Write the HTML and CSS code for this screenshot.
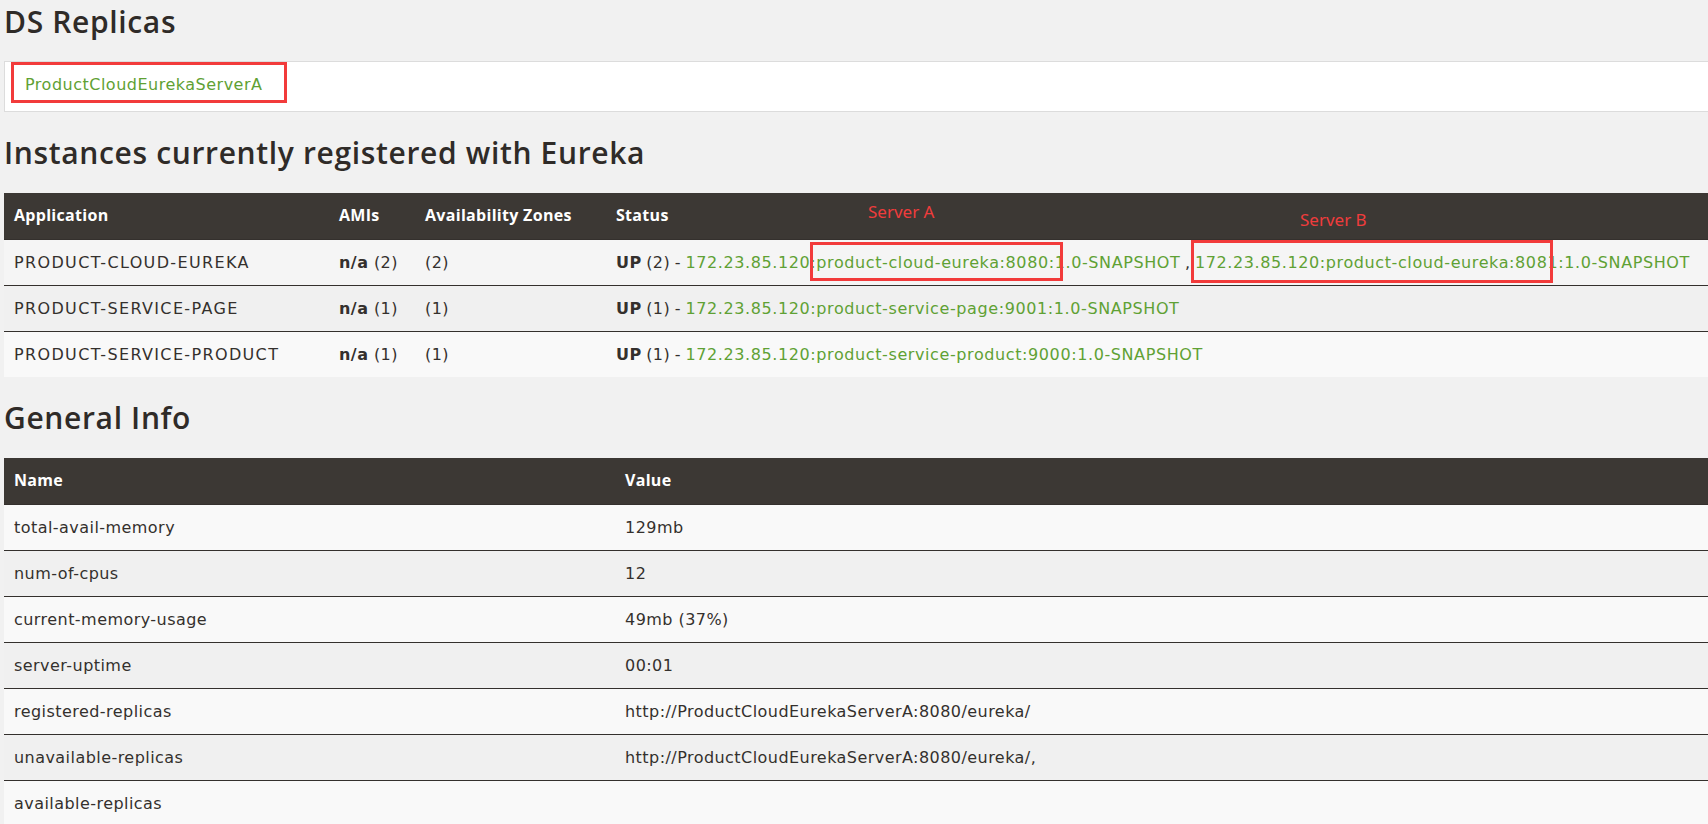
FILE: index.html
```html
<!DOCTYPE html>
<html lang="en">
<head>
<meta charset="utf-8">
<title>Eureka</title>
<link rel="stylesheet" href="styles.css">
</head>
<body>
<div class="page">
  <h1 class="title title-main">DS Replicas</h1>
  <div class="replicas">
    <a class="link" href="#">ProductCloudEurekaServerA</a>
    <span class="mark mark-replica"></span>
  </div>

  <h2 class="title title-section">Instances currently registered with Eureka</h2>
  <div class="instances-wrap">
    <table class="grid">
      <colgroup>
        <col class="c-app"><col class="c-ami"><col class="c-zone"><col>
      </colgroup>
      <thead>
        <tr><th>Application</th><th>AMIs</th><th>Availability Zones</th><th>Status</th></tr>
      </thead>
      <tbody>
        <tr class="row-hover">
          <td class="app">PRODUCT-CLOUD-EUREKA</td>
          <td><b>n/a</b> (2)</td>
          <td>(2)</td>
          <td class="status"><b>UP</b> (2) - <a class="link" href="#">172.23.85.120:product-cloud-eureka:8080:1.0-SNAPSHOT</a> , <a class="link" href="#">172.23.85.120:product-cloud-eureka:8081:1.0-SNAPSHOT</a></td>
        </tr>
        <tr class="row-even">
          <td class="app">PRODUCT-SERVICE-PAGE</td>
          <td><b>n/a</b> (1)</td>
          <td>(1)</td>
          <td class="status"><b>UP</b> (1) - <a class="link" href="#">172.23.85.120:product-service-page:9001:1.0-SNAPSHOT</a></td>
        </tr>
        <tr class="row-odd">
          <td class="app">PRODUCT-SERVICE-PRODUCT</td>
          <td><b>n/a</b> (1)</td>
          <td>(1)</td>
          <td class="status"><b>UP</b> (1) - <a class="link" href="#">172.23.85.120:product-service-product:9000:1.0-SNAPSHOT</a></td>
        </tr>
      </tbody>
    </table>
    <span class="note note-a">Server A</span>
    <span class="note note-b">Server B</span>
    <span class="mark mark-a"></span>
    <span class="mark mark-b"></span>
  </div>

  <h2 class="title title-section">General Info</h2>
  <table class="grid">
    <colgroup>
      <col class="c-name"><col>
    </colgroup>
    <thead>
      <tr><th>Name</th><th>Value</th></tr>
    </thead>
    <tbody>
      <tr class="row-odd"><td>total-avail-memory</td><td>129mb</td></tr>
      <tr class="row-even"><td>num-of-cpus</td><td>12</td></tr>
      <tr class="row-odd"><td>current-memory-usage</td><td>49mb (37%)</td></tr>
      <tr class="row-even"><td>server-uptime</td><td>00:01</td></tr>
      <tr class="row-odd"><td>registered-replicas</td><td>http://ProductCloudEurekaServerA:8080/eureka/</td></tr>
      <tr class="row-even"><td>unavailable-replicas</td><td>http://ProductCloudEurekaServerA:8080/eureka/,</td></tr>
      <tr class="row-odd"><td>available-replicas</td><td></td></tr>
    </tbody>
  </table>
</div>
</body>
</html>
```
FILE: styles.css
```css
html, body {
  margin: 0;
  padding: 0;
  overflow: hidden;
  background: #f1f1f1;
}

body {
  font-family: "DejaVu Sans", "Noto Sans", sans-serif;
  font-size: 16px;
  color: #34302d;
}

.page {
  width: 1800px;
  padding: 0 4px;
  box-sizing: border-box;
}

.title {
  font-family: "Open Sans", "Noto Sans", sans-serif;
  font-size: 30px;
  font-weight: 600;
  line-height: 36px;
  letter-spacing: 0.65px;
  color: #2f2b28;
  margin: 0;
}

.title-main {
  margin: 4px 0 21px;
}

.title-section {
  margin: 23px 0 22px;
}

.replicas {
  position: relative;
  background: #fff;
  border: 1px solid #dcdcdc;
  padding: 12px 20px 15px;
  line-height: 22px;
}

.link {
  color: #5fa134;
  text-decoration: none;
  letter-spacing: 0.5px;
}

.instances-wrap {
  position: relative;
}

.grid {
  width: 100%;
  border-collapse: separate;
  border-spacing: 0;
  table-layout: fixed;
}

.c-app { width: 325px; }
.c-ami { width: 86px; }
.c-zone { width: 191px; }
.c-name { width: 611px; }

.grid th {
  background: #3c3834;
  color: #fff;
  font-family: "Open Sans", "Noto Sans", sans-serif;
  font-weight: 700;
  font-size: 16px;
  letter-spacing: 0.3px;
  line-height: 22px;
  padding: 11px 10px 13px;
  text-align: left;
}

.grid td {
  padding: 12px 10px 11px;
  line-height: 22px;
  border-top: 1px solid #34302d;
  white-space: nowrap;
  letter-spacing: 0.45px;
}

.grid td.app {
  letter-spacing: 1.35px;
}

.status {
  word-spacing: -1px;
}

.status .link {
  word-spacing: 0;
  letter-spacing: 0.6px;
}

.row-hover { background: #f5f5f5; }
.row-odd { background: #f9f9f9; }
.row-even { background: #f0f0f0; }

.mark {
  position: absolute;
  border: 3px solid #f23b3b;
  box-sizing: border-box;
}

.mark-replica {
  left: 6px;
  top: 0;
  width: 276px;
  height: 41px;
}

.mark-a {
  left: 806px;
  top: 49px;
  width: 253px;
  height: 39px;
}

.mark-b {
  left: 1187px;
  top: 47px;
  width: 362px;
  height: 43px;
}

.note {
  position: absolute;
  font-family: "Noto Sans", "Noto Sans CJK SC", sans-serif;
  font-size: 17px;
  line-height: 20px;
  color: #f03c3c;
}

.note-a {
  left: 864px;
  top: 9px;
}

.note-b {
  left: 1296px;
  top: 17px;
}
```
